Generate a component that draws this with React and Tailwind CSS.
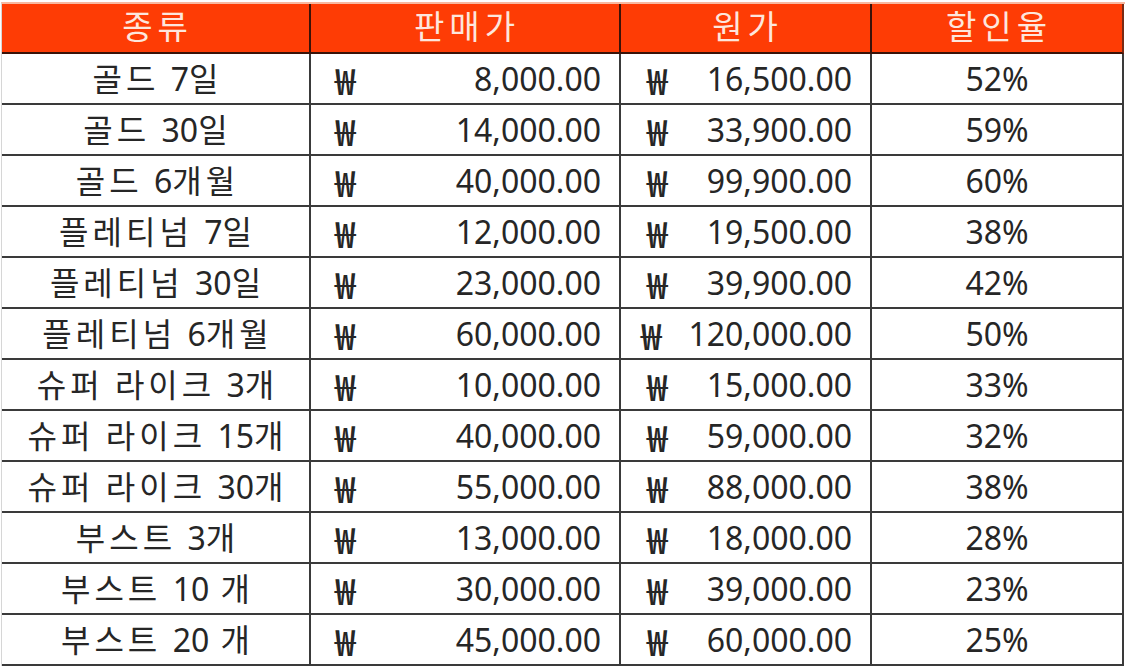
const rows = [
  ['골드 7일', '8,000.00', '16,500.00', '52%'],
  ['골드 30일', '14,000.00', '33,900.00', '59%'],
  ['골드 6개월', '40,000.00', '99,900.00', '60%'],
  ['플레티넘 7일', '12,000.00', '19,500.00', '38%'],
  ['플레티넘 30일', '23,000.00', '39,900.00', '42%'],
  ['플레티넘 6개월', '60,000.00', '120,000.00', '50%'],
  ['슈퍼 라이크 3개', '10,000.00', '15,000.00', '33%'],
  ['슈퍼 라이크 15개', '40,000.00', '59,000.00', '32%'],
  ['슈퍼 라이크 30개', '55,000.00', '88,000.00', '38%'],
  ['부스트 3개', '13,000.00', '18,000.00', '28%'],
  ['부스트 10 개', '30,000.00', '39,000.00', '23%'],
  ['부스트 20 개', '45,000.00', '60,000.00', '25%'],
];

const headers = ['종류', '판매가', '원가', '할인율'];

const font = { fontFamily: '"Noto Sans", "Noto Sans CJK KR", sans-serif' };
const cjk = { fontFamily: '"Noto Sans CJK KR", sans-serif' };

// hangul runs get a bit of extra spacing, like Malgun Gothic in the sheet
const Label = ({ text, track = 'tracking-[4px]' }) => {
  const parts = text.split(/([\uac00-\ud7a3]+)/).filter(Boolean);
  return (
    <span className="whitespace-nowrap [word-spacing:3px] ml-[4px]">
      {parts.map((p, i) =>
        /[\uac00-\ud7a3]/.test(p) ? (
          <span key={i} className={track}>{p}</span>
        ) : (
          <span key={i} className="whitespace-pre">{p}</span>
        )
      )}
    </span>
  );
};

const Won = ({ className = '' }) => (
  <span className={`font-medium text-[36px] leading-none ${className}`} style={cjk}>₩</span>
);

export default function App() {
  return (
    <div className="w-[1125px] h-[668px] bg-white overflow-hidden pt-[2px] pl-[1px]" style={font}>
      <div className="grid grid-cols-[309px_310px_251px_252px] grid-rows-[50px_repeat(12,51px)] border-l border-t-2 border-l-[#d6d6d6] border-t-[#f8b8a0] text-[32px] text-[#262626] leading-none">
        {headers.map((h, i) => (
          <div
            key={h}
            className={`bg-[#fe3c05] text-[#fde6dd] text-[33px] flex items-center justify-center pb-[4px] border-b-2 border-b-[#3a1208] ${
              i < 3 ? 'border-r-2 border-r-[#3a1208]' : 'border-r-2 border-r-[#7a2a14]'
            }`}
          >
            <Label text={h} track="tracking-[5px]" />
          </div>
        ))}
        {rows.map((r) => (
          <div key={r[0]} className="contents">
            <div className="flex items-center justify-center border-r-2 border-b-2 border-[#3a3a3a]">
              <Label text={r[0]} />
            </div>
            <div className="flex items-center justify-between pl-[24px] pr-[18px] border-r-2 border-b-2 border-[#3a3a3a]">
              <Won />
              <span>{r[1]}</span>
            </div>
            <div className="flex items-center justify-between pl-[26px] pr-[18px] border-r-2 border-b-2 border-[#3a3a3a]">
              <Won className={r[2].length > 9 ? '-ml-[6px]' : ''} />
              <span>{r[2]}</span>
            </div>
            <div className="flex items-center justify-center border-r-2 border-b-2 border-[#3a3a3a]">
              {r[3]}
            </div>
          </div>
        ))}
      </div>
    </div>
  );
}
